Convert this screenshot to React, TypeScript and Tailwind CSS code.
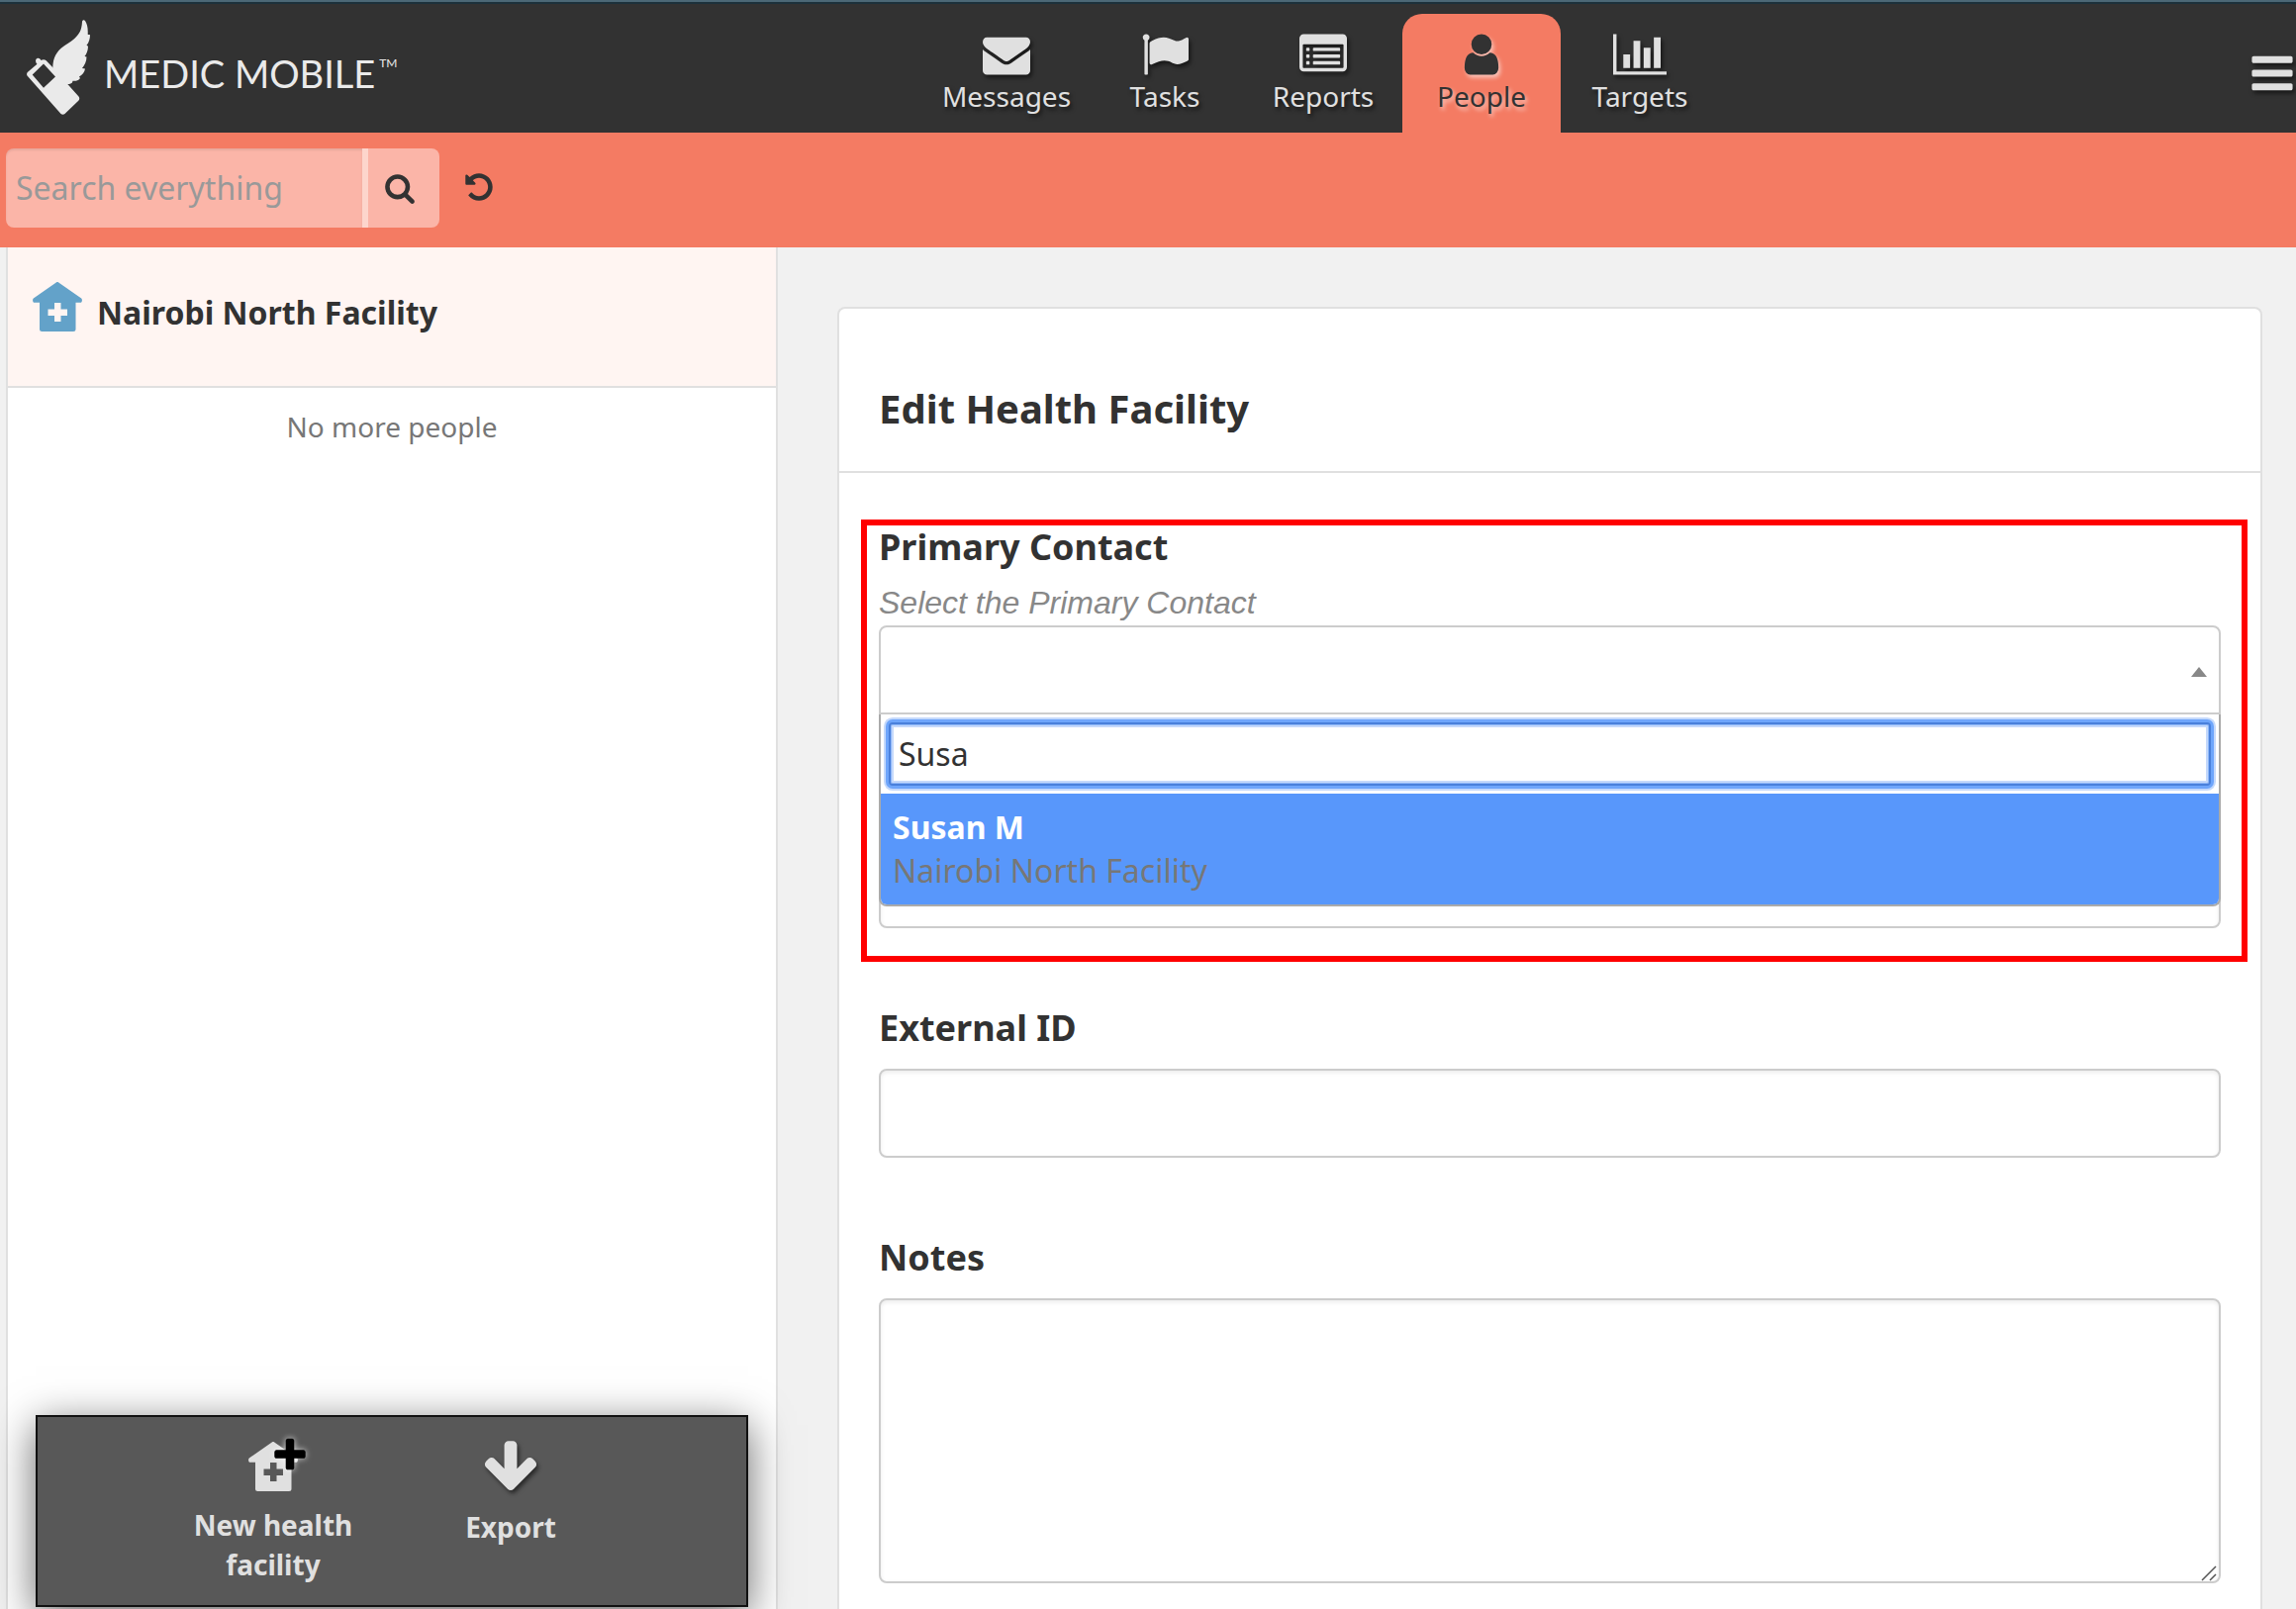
import React from "react";

type IconProps = { className?: string };

function Glyph({ d, width = 1792, className = "" }: { d: string; width?: number; className?: string }) {
  return (
    <svg viewBox={`0 0 ${width} 1792`} className={className} fill="currentColor" aria-hidden="true">
      <path d={d} />
    </svg>
  );
}

const ENVELOPE =
  "M1792 710v794q0 66-47 113t-113 47h-1472q-66 0-113-47t-47-113v-794q44 49 101 87 362 246 497 345 57 42 92.5 65.5t94.5 48 110 24.5h2q51 0 110-24.5t94.5-48 92.5-65.5q170-123 498-345 57-39 100-87zm0-294q0 79-49 151t-122 123q-376 261-468 325-10 7-42.5 31t-54 38.5-52 32.5-57.5 27-50 9h-2q-23 0-50-9t-57.5-27-52-32.5-54-38.5-42.5-31q-91-64-262-182.5t-205-142.5q-62-42-117-115.5t-55-136.5q0-78 41.5-130t118.5-52h1472q65 0 112.5 47t47.5 113z";
const FLAG =
  "M320 256q0 72-64 110v1266q0 13-9.5 22.5t-22.5 9.5h-64q-13 0-22.5-9.5t-9.5-22.5v-1266q-64-38-64-110 0-53 37.5-90.5t90.5-37.5 90.5 37.5 37.5 90.5zm1472 64v763q0 25-12.5 38.5t-39.5 27.5q-215 116-369 116-61 0-123.5-22t-108.5-48-115.5-48-142.5-22q-192 0-464 146-17 9-33 9-26 0-45-19t-19-45v-742q0-32 31-55 21-14 79-43 236-120 421-120 107 0 200 29t219 88q38 19 88 19 54 0 117.5-21t110-47 88-47 54.5-21q26 0 45 19t19 45z";
const USER =
  "M1536 1399q0 109-62.5 187t-150.5 78h-854q-88 0-150.5-78t-62.5-187q0-85 8.5-160.5t31.5-152 58.5-131 94-89 134.5-34.5q131 128 313 128t313-128q76 0 134.5 34.5t94 89 58.5 131 31.5 152 8.5 160.5zm-256-887q0 159-112.5 271.5t-271.5 112.5-271.5-112.5-112.5-271.5 112.5-271.5 271.5-112.5 271.5 112.5 112.5 271.5z";
const BAR_CHART =
  "M640 896v512h-256v-512h256zm384-512v1024h-256v-1024h256zm1024 1152v128h-2048v-1536h128v1408h1920zm-640-896v768h-256v-768h256zm384-384v1152h-256v-1152h256z";
const BARS =
  "M1664 1344v128q0 26-19 45t-45 19h-1408q-26 0-45-19t-19-45v-128q0-26 19-45t45-19h1408q26 0 45 19t19 45zm0-512v128q0 26-19 45t-45 19h-1408q-26 0-45-19t-19-45v-128q0-26 19-45t45-19h1408q26 0 45 19t19 45zm0-512v128q0 26-19 45t-45 19h-1408q-26 0-45-19t-19-45v-128q0-26 19-45t45-19h1408q26 0 45 19t19 45z";
const SEARCH =
  "M1216 832q0-185-131.5-316.5t-316.5-131.5-316.5 131.5-131.5 316.5 131.5 316.5 316.5 131.5 316.5-131.5 131.5-316.5zm512 832q0 52-38 90t-90 38q-54 0-90-38l-343-342q-179 124-399 124-143 0-273.5-55.5t-225-150-150-225-55.5-273.5 55.5-273.5 150-225 225-150 273.5-55.5 273.5 55.5 225 150 150 225 55.5 273.5q0 220-124 399l343 343q37 37 37 90z";
const UNDO =
  "M1664 896q0 156-61 298t-164 245-245 164-298 61q-172 0-327-72.5t-264-204.5q-7-10-6.5-22.5t8.5-20.5l137-138q10-9 25-9 16 2 23 12 73 95 179 147t225 52q104 0 198.5-40.5t163.5-109.5 109.5-163.5 40.5-198.5-40.5-198.5-109.5-163.5-163.5-109.5-198.5-40.5q-98 0-188 35.5t-160 101.5l137 138q31 30 14 69-17 40-59 40h-448q-26 0-45-19t-19-45v-448q0-42 40-59 39-17 69 14l130 129q107-101 244.5-156.5t284.5-55.5q156 0 298 61t245 164 164 245 61 298z";
const ARROW_DOWN =
  "M1675 832q0 53-37 90l-651 652q-39 37-91 37-53 0-90-37l-651-652q-38-36-38-90 0-53 38-91l74-75q39-37 91-37 53 0 90 37l294 294v-704q0-52 38-90t90-38h128q52 0 90 38t38 90v704l294-294q37-37 90-37 52 0 91 37l75 75q37 39 37 91z";
const PLUS =
  "M1600 736v192q0 40-28 68t-68 28h-416v416q0 40-28 68t-68 28h-192q-40 0-68-28t-28-68v-416h-416q-40 0-68-28t-28-68v-192q0-40 28-68t68-28h416v-416q0-40 28-68t68-28h192q40 0 68 28t28 68v416h416q40 0 68 28t28 68z";

const lightIcon = "h-12 drop-shadow-[2px_3px_2px_rgba(0,0,0,0.55)]";

function ListAlt({ className = "" }: IconProps) {
  return (
    <svg viewBox="0 0 1792 1792" className={className} fill="currentColor" aria-hidden="true">
      <path
        fillRule="evenodd"
        d="M160 128h1472a160 160 0 0 1 160 160v1088a160 160 0 0 1-160 160H160a160 160 0 0 1-160-160V288a160 160 0 0 1 160-160zM160 512a32 32 0 0 0-32 32v832a32 32 0 0 0 32 32h1472a32 32 0 0 0 32-32V544a32 32 0 0 0-32-32z"
      />
      {[640, 896, 1152].map((y) => (
        <g key={y}>
          <rect x="256" y={y} width="128" height="128" rx="32" />
          <rect x="512" y={y} width="1024" height="128" rx="32" />
        </g>
      ))}
    </svg>
  );
}

function House({ className = "" }: IconProps) {
  return (
    <svg viewBox="0 0 50 50" className={className} fill="currentColor" aria-hidden="true">
      <path
        fillRule="evenodd"
        d="M23.4.8a2.2 2.2 0 0 1 3.2 0L49.2 16.500c1.200 1 1 4.300-1.200 4.300H43.500V47.500a2.500 2.500 0 0 1-2.500 2.500H9.500A2.500 2.500 0 0 1 7 47.500V20.800H2C-.2 20.800-.4 17.500.8 16.500zM22 21v6.500h-6.500v6.500H22V40h6.500v-6h6.500v-6.500h-6.500V21z"
      />
    </svg>
  );
}

function WingLogo({ className = "" }: IconProps) {
  return (
    <svg viewBox="27 20 64 96" className={className} fill="currentColor" aria-hidden="true">
      <path d="M53.300 69C53.500 61 55 55 61.700 48.700C66 45 71 43 75 39.300C80 34.500 82.500 31 83 22C83.200 20 85 19.500 86 21C88 24 89 28 88.700 34.700C89.500 35 90 34.800 91 35.300C91 39 90 43 87.500 45.800L89 46.700C89 51 87.500 54.500 85.500 57L87.500 57.500C87.500 62 85.500 66 83 69L86 69.500C85.500 73 83 76 80 77.500L81 79C79 82 76 82 73.500 81.800L73 83.500C71 85 69.500 85.200 68 85L60 85z" />
      <path
        fillRule="evenodd"
        d="M27.800 73 37.500 64.700C35.500 63 35.500 59.500 38 58.800C39.800 58.500 41 60 41.500 61C43 59.800 45.500 60 46.700 61.300L56 71L68.300 85L79.500 97.500C80.500 98.700 80.500 100.500 79.300 101.700L65.500 115C64.500 116 62.500 116 61.500 115L27.500 76.500C26.800 75.500 27 74 27.800 73zM44 64.500 32.700 75.500 44 88.700 56 77.500z"
      />
    </svg>
  );
}

const tabs = [
  { label: "Messages", icon: <Glyph d={ENVELOPE} className={lightIcon} /> },
  { label: "Tasks", icon: <Glyph d={FLAG} className={lightIcon} /> },
  { label: "Reports", icon: <ListAlt className={lightIcon} /> },
  {
    label: "People",
    active: true,
    icon: <Glyph d={USER} className="h-12 drop-shadow-[2px_3px_2px_rgba(255,255,255,0.55)]" />,
  },
  { label: "Targets", icon: <Glyph d={BAR_CHART} width={2048} className={lightIcon} /> },
];

function Header() {
  return (
    <header className="grid grid-cols-[937fr_auto_583fr] border-t-2 border-[#4c6876] bg-[#323232] text-[#e0e0e0] shadow-[inset_0_2px_0_#1c313b]">
      <a href="#home" className="flex items-start pl-[27px] pt-[18px] text-[#eaeaea]">
        <WingLogo className="h-24 w-16" />
        <span className="ml-3.5 mt-[30px] font-['Lato'] text-[38px] leading-[48px]">MEDIC MOBILE</span>
        <span className="ml-1 mt-[34px] font-['Lato'] text-xs leading-5">TM</span>
      </a>
      <nav className="flex pt-3">
        {tabs.map((t) => (
          <a
            key={t.label}
            href={`#${t.label.toLowerCase()}`}
            className={
              t.active
                ? "flex h-[120px] w-40 flex-col items-center rounded-t-[20px] bg-[#f47b63] pt-[17px] text-[#323232] [text-shadow:2px_3px_4px_rgba(255,255,255,0.6)]"
                : "flex h-[120px] w-40 flex-col items-center pt-[17px] [text-shadow:2px_3px_4px_rgba(0,0,0,0.6)]"
            }
          >
            {t.icon}
            <span className="text-[28px] leading-9">{t.label}</span>
          </a>
        ))}
      </nav>
      <div className="flex justify-end">
        <button type="button" aria-label="Menu" className="mt-12 self-start">
          <Glyph d={BARS} className={lightIcon} />
        </button>
      </div>
    </header>
  );
}

function SearchBar() {
  return (
    <form className="flex bg-[#f47b63] pb-5 pl-1.5 pt-4 text-[#323232]" onSubmit={(e) => e.preventDefault()}>
      <input
        type="search"
        aria-label="Search everything"
        placeholder="Search everything"
        className="h-20 w-[360px] rounded-l-lg bg-[#fbb5a8] px-2.5 pb-0.5 text-[32px] shadow-[inset_0_2px_2px_rgba(0,0,0,0.08)] outline-none placeholder:text-[#999999]"
      />
      <button
        type="submit"
        aria-label="Search"
        className="h-20 w-[78px] rounded-r-lg border-l-[6px] border-[#fdd5cc] bg-[#fbb5a8] pl-4"
      >
        <Glyph d={SEARCH} className="size-8" />
      </button>
      <button type="button" aria-label="Reset" className="ml-6 mt-[23px] self-start">
        <Glyph d={UNDO} className="size-8" />
      </button>
    </form>
  );
}

function LeftPane() {
  return (
    <aside className="flex flex-col border-x-2 border-[#e0e0e0] bg-white">
      <ul>
        <li className="border-b-2 border-[#e0e0e0] bg-[#fff5f2]">
          <a href="#facility" className="flex h-[140px] items-start pl-[25px] pt-[35px]">
            <House className="size-[50px] text-[#63a2c9]" />
            <span className="ml-[15px] mt-[9px] text-[32px] font-bold leading-[44px]">Nairobi North Facility</span>
          </a>
        </li>
      </ul>
      <p className="mt-[19px] text-center text-[28px] leading-10 text-[#777777]">No more people</p>
      <div className="mx-7 mb-0.5 mt-auto flex h-[194px] justify-center border-2 border-[#111111] bg-[#585858] text-[28px] font-bold leading-10 text-[#e0e0e0] shadow-[0_10px_40px_rgba(0,0,0,0.6)] [text-shadow:2px_3px_4px_rgba(0,0,0,0.6)]">
        <button type="button" className="flex w-60 flex-col items-center px-8 pt-[25px]">
          <span className="relative">
            <House className="size-[50px]" />
            <Glyph
              d={PLUS}
              className="absolute -right-3 -top-1.5 size-10 text-black drop-shadow-[0_0_3px_rgba(255,255,255,0.8)]"
            />
          </span>
          <span className="mt-[14px]">New health facility</span>
        </button>
        <button type="button" className="flex w-60 flex-col items-center pt-5">
          <Glyph d={ARROW_DOWN} className="size-[60px] drop-shadow-[2px_3px_2px_rgba(0,0,0,0.55)]" />
          <span className="mt-[11px]">Export</span>
        </button>
      </div>
    </aside>
  );
}

const fieldBox =
  "block w-full rounded-lg border-2 border-[#cccccc] bg-white px-4 text-[32px] shadow-[inset_0_2px_4px_rgba(0,0,0,0.08)] outline-none";
const fieldLabel = "block pt-0.5 text-[36px] font-bold leading-[50px]";

function PrimaryContact() {
  return (
    <div className="relative">
      <span id="primary-label" className={fieldLabel}>
        Primary Contact
      </span>
      <p className="mt-2 font-['Liberation_Sans'] text-[32px] italic leading-[46px] text-[#888888]">
        Select the Primary Contact
      </p>
      <div className="relative">
        <button
          type="button"
          aria-labelledby="primary-label"
          aria-expanded="true"
          className="flex h-[90px] w-full items-center justify-end rounded-t-lg border-2 border-[#cccccc] bg-white pr-3"
        >
          <svg viewBox="0 0 16 10" className="mt-1 h-2.5 w-4 fill-[#888888]" aria-hidden="true">
            <path d="M0 10 8 0l8 10z" />
          </svg>
        </button>
        <div className="absolute inset-x-0 top-full z-10 overflow-hidden rounded-b-lg border-2 border-t-0 border-[#aaaaaa] bg-white">
          <div className="p-2">
            <input
              type="text"
              aria-label="Search contacts"
              defaultValue="Susa"
              className="block h-16 w-full rounded-sm border-2 border-[#4a80db] bg-white px-2 pb-0.5 text-[32px] shadow-[0_0_0_3px_#6ea5fb,0_0_0_5px_#c5d9fb,inset_0_0_0_1px_#8fb8f9,inset_0_0_0_3px_#c5d9fb] outline-none"
            />
          </div>
          <ul role="listbox" aria-label="Contacts">
            <li role="option" aria-selected="true" className="bg-[#5897fb] p-3 text-[32px] leading-[44px]">
              <div className="font-bold text-white">Susan M</div>
              <div className="text-[#777777]">Nairobi North Facility</div>
            </li>
          </ul>
        </div>
      </div>
      <input type="text" aria-label="Name" className={`mt-[126px] h-[90px] ${fieldBox}`} />
      <div className="pointer-events-none absolute -bottom-[34px] -left-[18px] -right-[27px] -top-px border-[6px] border-[#ff0000]" />
    </div>
  );
}

function EditCard() {
  return (
    <main className="mt-[60px] rounded-t-lg border-2 border-b-0 border-[#e0e0e0] bg-white">
      <h1 className="border-b-2 border-[#e0e0e0] px-10 pb-[35px] pt-[73px] text-[40px] font-bold leading-[56px]">
        Edit Health Facility
      </h1>
      <form className="flex flex-col gap-[74px] px-10 pt-12" onSubmit={(e) => e.preventDefault()}>
        <PrimaryContact />
        <div>
          <label htmlFor="external-id" className={fieldLabel}>
            External ID
          </label>
          <input id="external-id" type="text" className={`mt-4 h-[90px] ${fieldBox}`} />
        </div>
        <div>
          <label htmlFor="notes" className={fieldLabel}>
            Notes
          </label>
          <div className="relative mt-4">
            <textarea id="notes" className={`h-72 resize-none ${fieldBox}`} />
            <svg viewBox="0 0 16 16" className="absolute bottom-0.5 right-1 size-4" aria-hidden="true">
              <path d="M1 15 15 1M9 15l6-6" stroke="#555555" strokeWidth="1.500" fill="none" />
            </svg>
          </div>
        </div>
      </form>
    </main>
  );
}

export default function App() {
  return (
    <div className="flex min-h-screen flex-col bg-[#f1f1f1] font-['Noto_Sans',sans-serif] text-[#323232]">
      <Header />
      <SearchBar />
      <div className="grid flex-1 grid-cols-[13fr_24fr] gap-[60px] pl-1.5 pr-[34px]">
        <LeftPane />
        <EditCard />
      </div>
    </div>
  );
}
